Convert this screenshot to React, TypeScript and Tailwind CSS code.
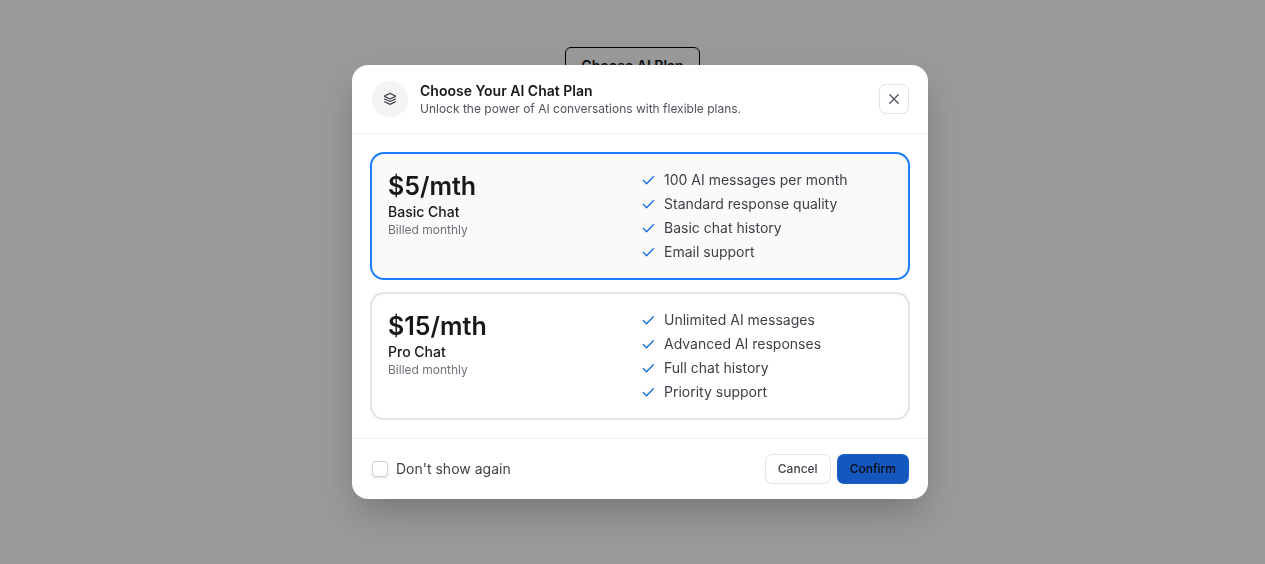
import { useState } from "react";

const plans = [
  {
    id: "basic",
    price: "$5/mth",
    name: "Basic Chat",
    features: [
      "100 AI messages per month",
      "Standard response quality",
      "Basic chat history",
      "Email support",
    ],
  },
  {
    id: "pro",
    price: "$15/mth",
    name: "Pro Chat",
    features: [
      "Unlimited AI messages",
      "Advanced AI responses",
      "Full chat history",
      "Priority support",
    ],
  },
];

function Icon({ d, width, className }: { d: string; width: number; className: string }) {
  return (
    <svg
      viewBox="0 0 16 16"
      fill="none"
      stroke="currentColor"
      strokeWidth={width}
      strokeLinecap="round"
      strokeLinejoin="round"
      aria-hidden="true"
      className={className}
    >
      <path d={d} />
    </svg>
  );
}

const LAYERS =
  "M7.5 2.6 2.9 4.7c-.45.2-.45.7 0 .9l4.6 2.1c.3.15.7.15 1 0l4.6-2.1c.45-.2.45-.7 0-.9L8.5 2.6c-.3-.15-.7-.15-1 0ZM2.6 8l4.9 2.3c.3.15.7.15 1 0L13.4 8M2.6 10.8l4.9 2.3c.3.15.7.15 1 0l4.9-2.3";
const CROSS = "m3.8 3.8 8.4 8.4M12.2 3.8l-8.4 8.4";
const CHECK = "m3.4 8.6 3.1 3.1 6.9-6.9";

export default function App() {
  const [selected, setSelected] = useState("basic");

  return (
    <div className="min-h-screen bg-white font-['Inter',sans-serif] text-sm text-zinc-900">
      <main className="flex justify-center pt-[47px]">
        <button
          type="button"
          className="h-[38px] rounded-md border border-black px-[15px] text-sm font-semibold text-zinc-900"
        >
          Choose AI Plan
        </button>
      </main>

      <div className="fixed inset-0 flex items-center justify-center bg-black/40 pl-[15px]">
        <div
          role="dialog"
          aria-modal="true"
          aria-labelledby="plan-title"
          className="w-full max-w-xl rounded-2xl bg-white shadow-[0_16px_36px_-6px_rgba(0,0,0,0.25)]"
        >
          <header className="flex items-center gap-3 border-b border-zinc-100 px-5 py-4">
            <div className="flex size-9 items-center justify-center rounded-full bg-zinc-100 text-zinc-700">
              <Icon d={LAYERS} width={1.2} className="size-4" />
            </div>
            <div className="flex-1">
              <h2 id="plan-title" className="text-sm leading-5 font-semibold">
                Choose Your AI Chat Plan
              </h2>
              <p className="text-xs leading-4 text-zinc-600">
                Unlock the power of AI conversations with flexible plans.
              </p>
            </div>
            <button
              type="button"
              aria-label="Close"
              className="flex size-7 items-center justify-center rounded-md text-zinc-600 ring-1 ring-zinc-200"
            >
              <Icon d={CROSS} width={1.3} className="size-4" />
            </button>
          </header>

          <div className="flex flex-col gap-4 p-5">
            {plans.map((plan) => (
              <label
                key={plan.id}
                className={
                  selected === plan.id
                    ? "grid cursor-pointer grid-cols-2 rounded-xl bg-[#fafafa] p-4 ring-2 ring-[#1a7cff]"
                    : "grid cursor-pointer grid-cols-2 rounded-xl bg-white p-4 ring-2 ring-[#e3e3e4]"
                }
              >
                <div>
                  <input
                    type="radio"
                    name="plan"
                    value={plan.id}
                    checked={selected === plan.id}
                    onChange={() => setSelected(plan.id)}
                    className="sr-only"
                  />
                  <div className="text-[25px] leading-8 font-semibold">{plan.price}</div>
                  <div className="leading-5 font-medium">{plan.name}</div>
                  <div className="text-xs leading-4 text-zinc-500">Billed monthly</div>
                </div>
                <ul className="flex flex-col gap-1">
                  {plan.features.map((feature) => (
                    <li key={feature} className="flex items-center gap-2 leading-5 text-zinc-700">
                      <Icon d={CHECK} width={1.4} className="size-4 shrink-0 text-[#1a6fe0]" />
                      {feature}
                    </li>
                  ))}
                </ul>
              </label>
            ))}
          </div>

          <footer className="flex items-center justify-between border-t border-zinc-100 px-5 py-4">
            <label className="flex items-center gap-2 leading-5 text-zinc-700">
              <input
                type="checkbox"
                className="size-4 appearance-none rounded-sm border border-zinc-300 bg-white shadow-sm checked:bg-blue-600"
              />
              Don't show again
            </label>
            <div className="flex gap-2">
              <button
                type="button"
                className="h-7 rounded-md px-3 text-xs font-medium text-zinc-700 ring-1 ring-zinc-200"
              >
                Cancel
              </button>
              <button
                type="button"
                className="h-7 rounded-md bg-[#1458be] px-3 text-xs font-medium text-zinc-950 ring-1 ring-[#1a60c8]"
              >
                Confirm
              </button>
            </div>
          </footer>
        </div>
      </div>
    </div>
  );
}
